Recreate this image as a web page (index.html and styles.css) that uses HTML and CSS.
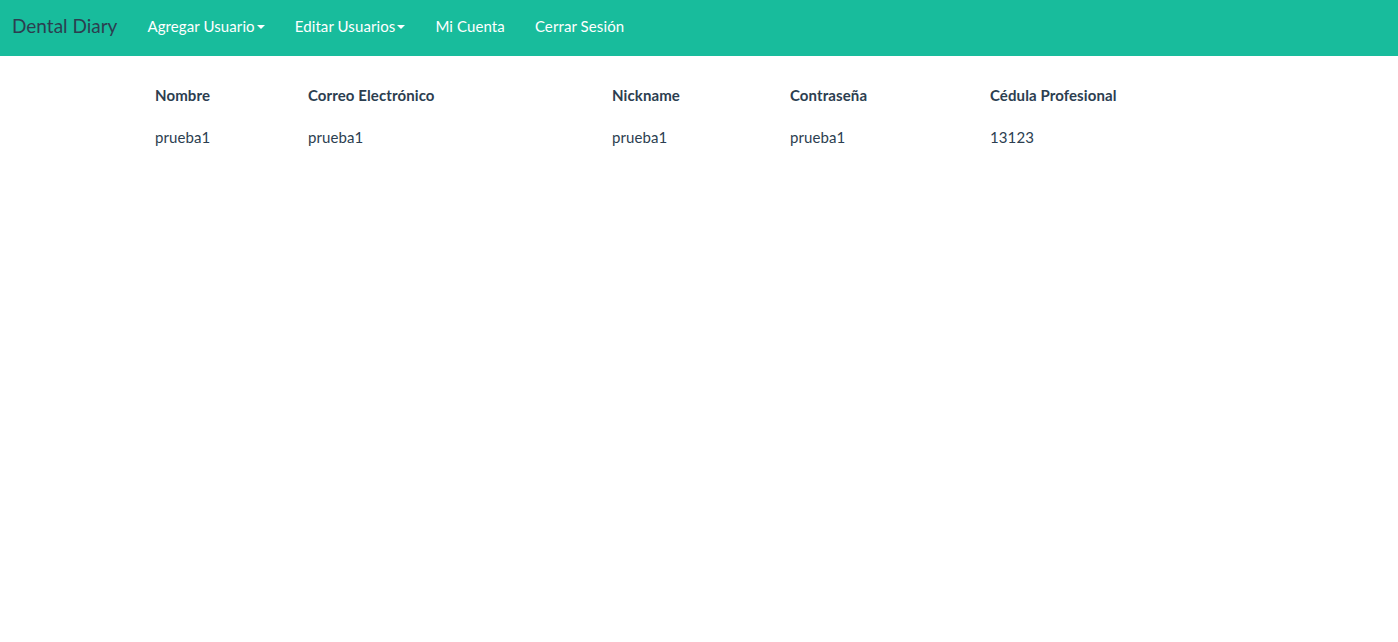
FILE: index.html
```html
<!DOCTYPE html>
<html lang="es">
<head>
<meta charset="utf-8">
<title>Dental Diary</title>
<link rel="stylesheet" href="styles.css">
</head>
<body>
<nav class="navbar">
  <a class="brand" href="#">Dental Diary</a>
  <ul class="nav">
    <li><a href="#">Agregar Usuario<span class="caret"></span></a></li>
    <li><a href="#">Editar Usuarios<span class="caret"></span></a></li>
    <li><a href="#">Mi Cuenta</a></li>
    <li><a href="#">Cerrar Sesión</a></li>
  </ul>
</nav>
<main class="content">
  <table class="users">
    <thead>
      <tr>
        <th class="c1">Nombre</th>
        <th class="c2">Correo Electrónico</th>
        <th class="c3">Nickname</th>
        <th class="c4">Contraseña</th>
        <th class="c5">Cédula Profesional</th>
      </tr>
    </thead>
    <tbody>
      <tr>
        <td>prueba1</td>
        <td>prueba1</td>
        <td>prueba1</td>
        <td>prueba1</td>
        <td>13123</td>
      </tr>
    </tbody>
  </table>
</main>
</body>
</html>
```
FILE: styles.css
```css
* { box-sizing: border-box; }
html, body { margin: 0; padding: 0; }
body {
  font-family: Lato, "Open Sans", sans-serif;
  font-size: 15px;
  line-height: 1.428571;
  color: #2c3e50;
  background: #fff;
}
.navbar {
  display: flex;
  align-items: flex-start;
  height: 56px;
  background: #18bc9c;
}
.brand {
  padding: 0 15px 0 12px;
  font-size: 19px;
  color: #2c3e50;
  text-decoration: none;
  line-height: 52px;
}
.nav {
  display: flex;
  list-style: none;
  margin: 0;
  padding: 0;
}
.nav a {
  display: flex;
  align-items: center;
  padding: 0 15px;
  line-height: 52px;
  color: #fff;
  text-decoration: none;
  font-size: 15px;
  letter-spacing: 0.1px;
}
.caret {
  display: inline-block;
  width: 0;
  height: 0;
  margin-left: 2px;
  margin-top: 1px;
  border-top: 4px solid #fff;
  border-left: 4px solid transparent;
  border-right: 4px solid transparent;
}
.content {
  padding-top: 19px;
  display: flex;
  justify-content: center;
}
.users {
  width: 1104px;
  border-collapse: collapse;
  table-layout: fixed;
}
.users th, .users td {
  text-align: left;
  padding: 10px 8px 11px;
  line-height: 21px;
  vertical-align: top;
  letter-spacing: 0.1px;
}
.users th { font-weight: bold; }
.c1 { width: 153px; }
.c2 { width: 304px; }
.c3 { width: 178px; }
.c4 { width: 200px; }
```
